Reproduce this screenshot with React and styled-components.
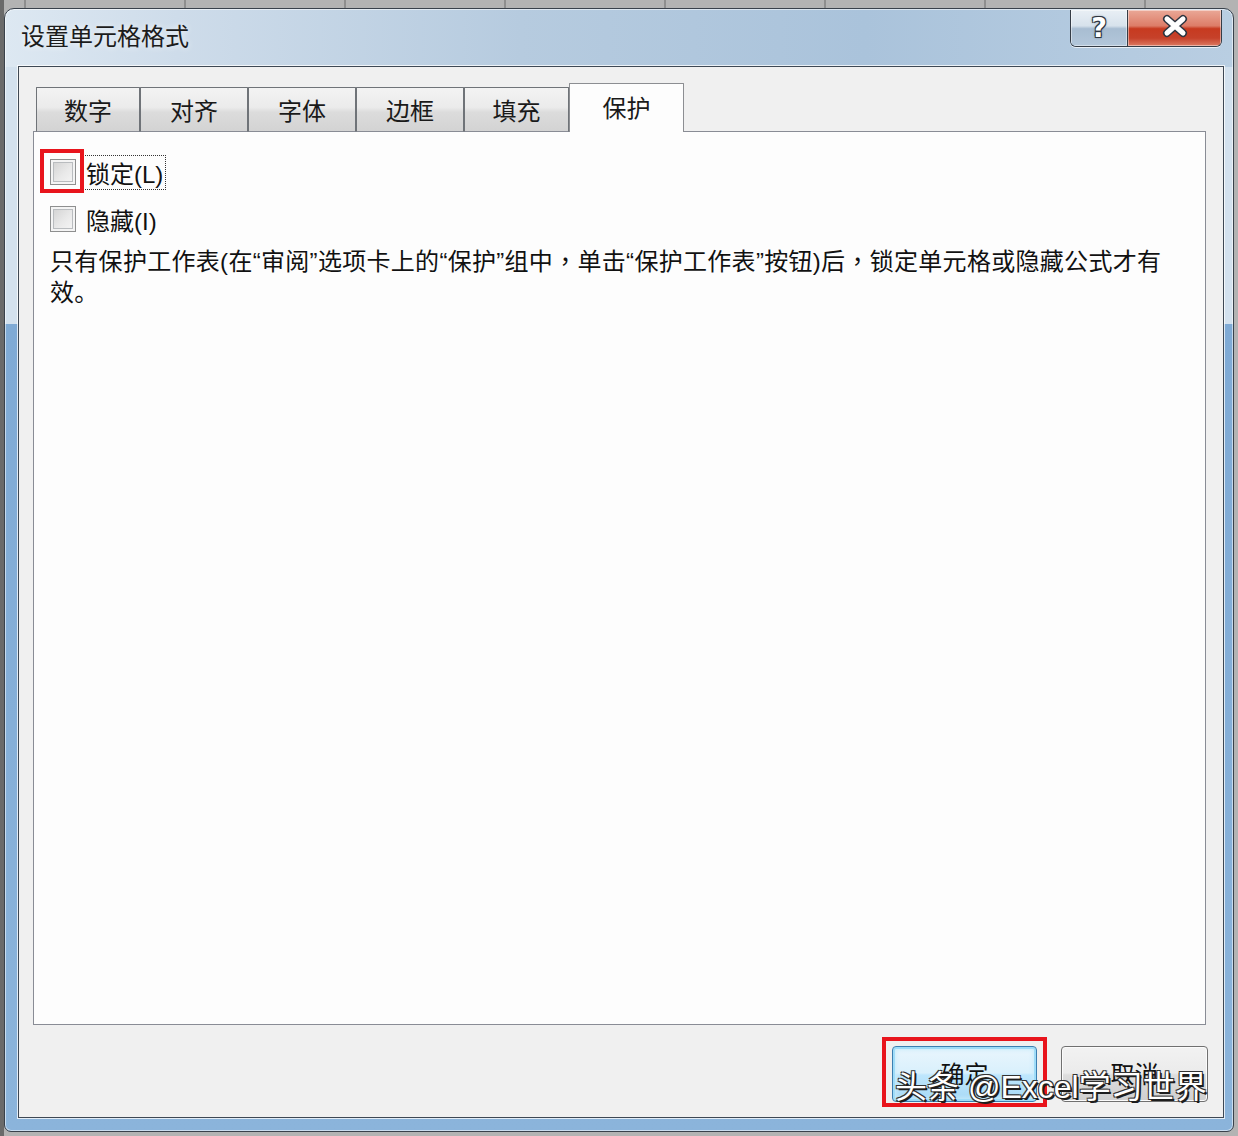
import React from 'react';
import styled, { createGlobalStyle } from 'styled-components';

const FONT = '"Liberation Sans", "Noto Sans CJK SC", sans-serif';

const Global = createGlobalStyle`
  html, body {
    margin: 0;
    padding: 0;
  }
  body {
    background: #a9a9a9;
    font-family: ${FONT};
  }
`;

const Page = styled.div`
  position: relative;
  width: 1238px;
  height: 1136px;
  box-sizing: border-box;
  padding: 8px 4px 4px 4px;
  background:
    repeating-linear-gradient(to right, transparent 0 24px, #8e8e8e 24px 26px, transparent 26px 160px) top / 100% 8px no-repeat,
    linear-gradient(to right, #6a6a6a 0 4px, #b3b3b3 4px);
`;

const Window = styled.div`
  height: 100%;
  box-sizing: border-box;
  display: flex;
  flex-direction: column;
  padding: 0 9px 13px 13px;
  border: 1px solid #39414b;
  border-radius: 10px 10px 7px 7px;
  background:
    linear-gradient(to right, #dde8f2 0%, #cedcea 14%, #b6cbdf 42%, #aac3db 70%, #b9cee2 100%) top / 100% 58px no-repeat,
    linear-gradient(to bottom, #d3e1ee 0, #d3e1ee 315px, #7faad5 315px, #8bb4db 100%);
  box-shadow: inset 0 0 0 1px rgba(255, 255, 255, 0.55);
`;

const TitleBar = styled.div`
  height: 57px;
  flex-shrink: 0;
  display: flex;
  align-items: center;
  justify-content: space-between;
  padding-left: 3px;
`;

const Title = styled.div`
  font-size: 24px;
  color: #1c1c1c;
  margin-top: -6px;
  text-shadow: 0 0 6px rgba(255, 255, 255, 0.9);
`;

const Captions = styled.div`
  align-self: flex-start;
  display: flex;
  margin: 1px 2px 0 0;
  height: 37px;
  box-sizing: border-box;
  border: 1px solid #353d47;
  border-top: none;
  border-radius: 0 0 6px 6px;
  overflow: hidden;
  box-shadow: 0 1px 0 rgba(255, 255, 255, 0.7);
`;

const CaptionButton = styled.div`
  width: ${p => p.$w}px;
  display: flex;
  align-items: center;
  justify-content: center;
  box-shadow: inset 0 0 0 1px rgba(255, 255, 255, 0.45);
  background: ${p => p.$close
    ? 'linear-gradient(#eaa897, #dd7d68 44%, #c73a20 52%, #c6412a 78%, #dc7a62 100%)'
    : 'linear-gradient(#e9eff5, #d7e2ec 44%, #a8bdd2 52%, #b3c7da 100%)'};
  & + & {
    border-left: 1px solid #353d47;
  }
`;

const HelpGlyph = styled.span`
  font-family: "DejaVu Sans", sans-serif;
  font-weight: bold;
  font-size: 27px;
  line-height: 1;
  color: #fff;
  margin-top: -2px;
  text-shadow: -1px -1px 0 #2d3540, 1px -1px 0 #2d3540, -1px 1px 0 #2d3540, 1px 1px 0 #2d3540, 0 0 3px #2d3540;
`;

const Client = styled.div`
  flex: 1;
  display: flex;
  flex-direction: column;
  border: 1px solid #3e4854;
  background: #f0f0f0;
  padding: 17px 17px 14px 14px;
  box-shadow: 0 0 0 1px rgba(255, 255, 255, 0.75);
`;

const TabStrip = styled.div`
  display: flex;
  align-items: flex-end;
  height: 48px;
  padding-left: 3px;
  margin-bottom: -1px;
  position: relative;
  z-index: 1;
`;

const Tab = styled.div`
  width: ${p => p.$w}px;
  height: ${p => (p.$active ? 49 : 45)}px;
  box-sizing: border-box;
  display: flex;
  align-items: center;
  justify-content: center;
  padding-bottom: ${p => (p.$active ? 4 : 0)}px;
  font-size: 24px;
  color: #1a1a1a;
  border: 1px solid ${p => (p.$active ? '#8c8e92' : '#6f7378')};
  border-bottom: ${p => (p.$active ? 'none' : '1px solid #898c95')};
  border-radius: 1px 1px 0 0;
  background: ${p => (p.$active
    ? '#fdfdfd'
    : 'linear-gradient(#f3f3f3, #ebebeb 45%, #dcdcdc 56%, #d3d3d3)')};
`;

const Panel = styled.div`
  height: 894px;
  box-sizing: border-box;
  border: 1px solid #898c95;
  background: #fdfdfd;
  padding: 27px 16px 0 16px;
`;

const CheckRow = styled.div`
  display: flex;
  align-items: center;
  gap: 7px;
  height: 26px;
  margin-bottom: ${p => p.$gap || 0}px;
`;

const Box = styled.div`
  position: relative;
  width: 26px;
  height: 26px;
  box-sizing: border-box;
  border: 1px solid #8e8f8f;
  background: linear-gradient(135deg, #cfcfcf, #e9e9e9 55%, #f7f7f7);
  box-shadow: inset 0 0 0 2px #f4f4f4, inset 0 0 0 3px #b9bcbf;
`;

const RedMark = styled.div`
  position: absolute;
  left: ${p => p.$l}px;
  top: ${p => p.$t}px;
  width: ${p => p.$w}px;
  height: ${p => p.$h}px;
  box-sizing: border-box;
  border: 4px solid #e8141c;
  pointer-events: none;
`;

const Label = styled.span`
  display: inline-flex;
  align-items: center;
  height: 35px;
  box-sizing: border-box;
  padding: 0 2px;
  font-size: 24px;
  color: #111;
  border: 1px dotted ${p => (p.$focus ? '#333' : 'transparent')};
`;

const Note = styled.p`
  margin: 14px 0 0 0;
  font-size: 24px;
  line-height: 31px;
  letter-spacing: 0.3px;
  color: #111;
  white-space: nowrap;
`;

const Comma = styled.span`
  font-family: "Noto Sans CJK TC", "Noto Sans CJK SC", sans-serif;
  line-height: 1;
`;

const ButtonRow = styled.div`
  display: flex;
  justify-content: flex-end;
  gap: 24px;
  margin: 21px -2px 0 0;
`;

const Button = styled.div`
  position: relative;
  width: ${p => p.$w}px;
  height: 56px;
  box-sizing: border-box;
  display: flex;
  align-items: center;
  justify-content: center;
  padding-bottom: 4px;
  font-size: 24px;
  color: #111;
  border: 1px solid ${p => (p.$default ? '#3c7fb1' : '#707070')};
  border-radius: 4px;
  background: ${p => (p.$default
    ? 'linear-gradient(#eaf6fd, #d9f0fc 48%, #bee6fd 52%, #a7d9f5)'
    : 'linear-gradient(#f2f2f2, #ebebeb 48%, #dddddd 52%, #cfcfcf)')};
  box-shadow: ${p => (p.$default
    ? 'inset 0 0 0 2px #9fdcf8, inset 0 0 4px 3px #c9ecfb'
    : 'inset 0 0 0 1px #fbfbfb')};
`;

const Watermark = styled.div`
  position: absolute;
  left: 895px;
  top: 1067px;
  font-size: 32px;
  line-height: 40px;
  color: #fff;
  white-space: nowrap;
  text-shadow: 2px 2px 0 #1d1d1d, -1px -1px 0 #333, 1px -1px 0 #333, -1px 1px 0 #333, 1px 1px 0 #333;
  pointer-events: none;
`;

const tabs = [
  { label: '数字', w: 104 },
  { label: '对齐', w: 108 },
  { label: '字体', w: 108 },
  { label: '边框', w: 108 },
  { label: '填充', w: 105 },
  { label: '保护', w: 115, active: true },
];

function CloseGlyph() {
  return (
    <svg width="30" height="24" viewBox="0 0 30 24" style={{ marginTop: -4 }}>
      <path d="M7 5 L23 19 M23 5 L7 19" stroke="#2d3540" strokeWidth="8" strokeLinecap="round" />
      <path d="M7 5 L23 19 M23 5 L7 19" stroke="#ffffff" strokeWidth="5" strokeLinecap="round" />
    </svg>
  );
}

export default function App() {
  return (
    <>
      <Global />
      <Page>
        <Window>
          <TitleBar>
            <Title>设置单元格格式</Title>
            <Captions>
              <CaptionButton $w={56}>
                <HelpGlyph>?</HelpGlyph>
              </CaptionButton>
              <CaptionButton $w={93} $close>
                <CloseGlyph />
              </CaptionButton>
            </Captions>
          </TitleBar>
          <Client>
            <TabStrip>
              {tabs.map(t => (
                <Tab key={t.label} $w={t.w} $active={t.active}>{t.label}</Tab>
              ))}
            </TabStrip>
            <Panel>
              <CheckRow $gap={21}>
                <Box>
                  <RedMark $l={-11} $t={-11} $w={44} $h={44} />
                </Box>
                <Label $focus>锁定(L)</Label>
              </CheckRow>
              <CheckRow>
                <Box />
                <Label>隐藏(I)</Label>
              </CheckRow>
              <Note>
                只有保护工作表(在“审阅”选项卡上的“保护”组中<Comma>，</Comma>单击“保护工作表”按钮)后<Comma>，</Comma>锁定单元格或隐藏公式才有
                <br />
                效。
              </Note>
            </Panel>
            <ButtonRow>
              <Button $w={145} $default>
                确定
                <RedMark $l={-11} $t={-10} $w={165} $h={70} />
              </Button>
              <Button $w={147}>取消</Button>
            </ButtonRow>
          </Client>
        </Window>
        <Watermark>头条 @Excel学习世界</Watermark>
      </Page>
    </>
  );
}
